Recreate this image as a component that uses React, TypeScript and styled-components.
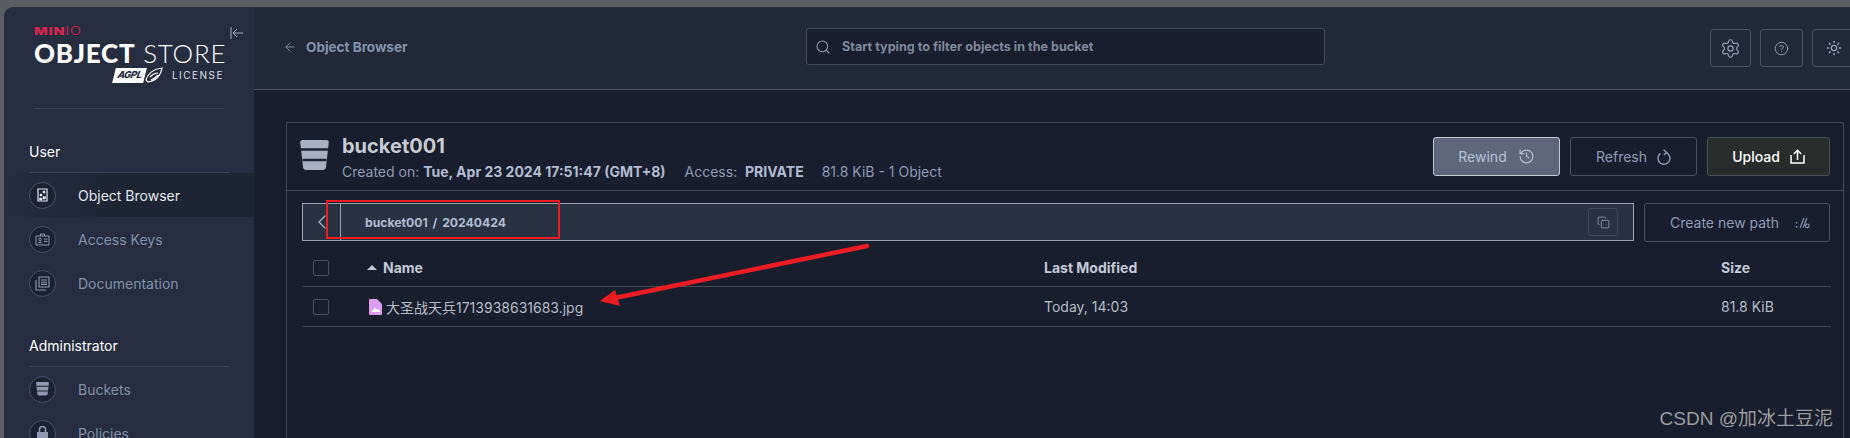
import type { ReactNode } from 'react';
import styled, { createGlobalStyle } from 'styled-components';
import { ArrowLeft, ChevronLeft, CircleHelp, Copy, History, Search, Settings, Sun } from 'lucide-react';

const GlobalStyle = createGlobalStyle`
  html, body { margin: 0; padding: 0; height: 100%; background: #5c5d62; overflow: hidden; }
  body { font-family: Inter, "Noto Sans CJK SC", sans-serif; }
  * { box-sizing: border-box; }
`;

const Page = styled.div`
  position: relative;
  width: 1850px;
  height: 438px;
  padding: 7px 0 0 4px;
  display: flex;
  overflow: hidden;
  background: #5c5d62;
`;

const Sidebar = styled.aside`
  position: relative;
  width: 250px;
  flex: none;
  background: #252d3e;
  border-top-left-radius: 9px;
  padding-top: 20px;
  overflow: hidden;
`;

const Collapse = styled.div`
  position: absolute;
  top: 19px;
  left: 226px;
  color: #a9b1bf;
  display: flex;
`;

const Logo = styled.div`
  margin: 0 0 0 30px;
  width: 190px;
  height: 82px;
  border-bottom: 1px solid #3a4253;
  color: #fff;
`;

const MinioMark = styled.div`
  font-size: 11px;
  line-height: 8px;
  height: 8px;
  font-weight: 800;
  color: #e0234e;
  letter-spacing: 0.6px;
  transform: scaleX(1.32);
  transform-origin: left;
  span { font-weight: 300; }
`;

const StoreTitle = styled.div`
  margin-top: 6px;
  font-size: 26px;
  line-height: 24px;
  height: 24px;
  white-space: nowrap;
  font-family: Lato, sans-serif;
  font-weight: 300;
  letter-spacing: 0.75px;
  b { font-weight: 900; }
`;

const LicenseRow = styled.div`
  margin-top: 2px;
  display: flex;
  justify-content: flex-end;
  align-items: center;
  gap: 9px;
`;

const AgplBadge = styled.div`
  display: flex;
  align-items: center;
  width: 49px;
  height: 16px;
`;

const AgplText = styled.div`
  width: 31px;
  height: 15px;
  background: #fff;
  color: #252d3e;
  font-size: 9.5px;
  line-height: 14px;
  font-weight: 800;
  font-style: italic;
  text-align: center;
  transform: skewX(-14deg);
  letter-spacing: -0.4px;
`;

const LicenseText = styled.div`
  font-size: 10px;
  letter-spacing: 1.5px;
  color: #dfe2e8;
`;

const GroupLabel = styled.div<{ $top: number }>`
  margin: ${({ $top }) => $top}px 25px 0 25px;
  height: 32px;
  padding-bottom: 12px;
  display: flex;
  align-items: flex-end;
  font-size: 14px;
  line-height: 16px;
  font-weight: 400;
  color: #fff;
  border-bottom: 1px solid #3a4253;
`;

const NavItem = styled.div<{ $active?: boolean }>`
  height: 44px;
  padding-left: 25px;
  display: flex;
  align-items: center;
  gap: 22px;
  font-size: 14px;
  color: ${({ $active }) => ($active ? '#e3e8f0' : '#8491a8')};
  background: ${({ $active }) => ($active ? 'linear-gradient(90deg, #252d3e 0%, #1d2432 45%, #1d2432 100%)' : 'transparent')};
`;

const NavIcon = styled.div<{ $active?: boolean }>`
  width: 27px;
  height: 27px;
  border-radius: 50%;
  border: 1px solid #4c5464;
  background: #1b2130;
  color: ${({ $active }) => ($active ? '#e3e8f0' : '#8f9ab0')};
  display: flex;
  align-items: center;
  justify-content: center;
`;

const Main = styled.main`
  flex: 1;
  min-width: 0;
  display: flex;
  flex-direction: column;
  background: #181e2b;
`;

const Header = styled.header`
  height: 83px;
  flex: none;
  background: #222936;
  border-bottom: 1px solid #4b505c;
  padding: 21px 0 0 29px;
  display: flex;
  align-items: flex-start;
`;

const BackLink = styled.div`
  width: 523px;
  height: 38px;
  flex: none;
  display: flex;
  align-items: center;
  gap: 9px;
  color: #8492aa;
  font-size: 13.5px;
  font-weight: 700;
`;

const SearchBox = styled.div`
  width: 519px;
  height: 37px;
  flex: none;
  background: #181e2b;
  border: 1px solid #454b58;
  border-radius: 3px;
  padding-left: 8px;
  display: flex;
  align-items: center;
  gap: 11px;
  color: #98a0ad;
  font-size: 12.6px;
  font-weight: 700;
  span { color: #7f8999; }
`;

const HeaderTools = styled.div`
  margin: 1px 0 0 385px;
  display: flex;
  gap: 9px;
  flex: none;
`;

const ToolButton = styled.div<{ $width: number }>`
  width: ${({ $width }) => $width}px;
  height: 38px;
  flex: none;
  border: 1px solid #4d5360;
  border-radius: 3px;
  color: #98a3b6;
  display: flex;
  align-items: center;
  justify-content: center;
`;

const Content = styled.div`
  flex: 1;
  padding: 32px 6px 0 32px;
  min-height: 0;
`;

const Panel = styled.section`
  height: 100%;
  border: 1px solid #444a57;
  border-bottom: 0;
  border-top-right-radius: 3px;
  display: flex;
  flex-direction: column;
`;

const PanelHead = styled.div`
  height: 68px;
  flex: none;
  border-bottom: 1px solid #444a57;
  padding: 11px 13px 0 13px;
  display: flex;
  align-items: flex-start;
`;

const BucketArt = styled.div`
  width: 29px;
  margin-top: 6px;
  color: #a9b1c1;
  flex: none;
  display: flex;
`;

const TitleBlock = styled.div`
  margin-left: 13px;
  flex: 1;
`;

const BucketName = styled.div`
  font-size: 20px;
  line-height: 24px;
  font-weight: 700;
  color: #c6cbd4;
`;

const Meta = styled.div`
  margin-top: 6px;
  display: flex;
  font-size: 14px;
  line-height: 16px;
  color: #8f9cb4;
  b { font-weight: 700; color: #b1bccf; }
`;

const MetaItem = styled.span<{ $gap?: number }>`
  margin-left: ${({ $gap }) => $gap ?? 0}px;
  white-space: pre;
`;

const Actions = styled.div`
  margin-top: 3px;
  display: flex;
  gap: 10px;
  flex: none;
`;

const ActionButton = styled.div<{ $kind?: 'active' | 'primary'; $width: number; $iconGap?: number; $inset?: number }>`
  width: ${({ $width }) => $width}px;
  height: 39px;
  padding-left: ${({ $inset }) => $inset ?? 0}px;
  border-radius: 3px;
  border: 1px solid ${({ $kind }) => ($kind === 'active' ? '#c4c9d2' : '#4a505c')};
  background: ${({ $kind }) => ($kind === 'active' ? '#5f687b' : $kind === 'primary' ? '#282d2c' : 'transparent')};
  color: ${({ $kind }) => ($kind === 'primary' ? '#fff' : $kind === 'active' ? '#b7c2d6' : '#8f9cb4')};
  display: flex;
  align-items: center;
  justify-content: center;
  gap: ${({ $iconGap }) => $iconGap ?? 10}px;
  font-size: 14px;
  font-weight: ${({ $kind }) => ($kind === 'primary' ? 500 : 400)};
`;

const PanelBody = styled.div`
  flex: 1;
  padding: 12px 12px 0 15px;
`;

const PathRow = styled.div`
  display: flex;
  gap: 10px;
`;

const Breadcrumb = styled.div`
  width: 1332px;
  height: 38px;
  flex: none;
  background: #293241;
  border: 1px solid #99a2b1;
  display: flex;
  align-items: center;
`;

const BackCell = styled.div`
  width: 38px;
  height: 100%;
  flex: none;
  border-right: 1px solid #99a2b1;
  color: #a9b3c4;
  display: flex;
  align-items: center;
  justify-content: center;
`;

const Crumbs = styled.div`
  flex: 1;
  padding-left: 24px;
  font-size: 12.2px;
  font-weight: 700;
  color: #b1bccf;
  word-spacing: 2px;
`;

const CopyButton = styled.div`
  width: 30px;
  height: 28px;
  margin-right: 15px;
  border: 1px solid #424b5a;
  border-radius: 3px;
  color: #a0a9b8;
  display: flex;
  align-items: center;
  justify-content: center;
`;

const Table = styled.div`
  margin: 7px 0 0 1px;
`;

const Row = styled.div<{ $head?: boolean }>`
  height: ${({ $head }) => ($head ? 38 : 40)}px;
  display: grid;
  grid-template-columns: 64px 677px 677px 1fr;
  align-items: center;
  border-bottom: 1px solid #444a57;
  font-size: 14px;
  font-weight: ${({ $head }) => ($head ? 700 : 400)};
  color: ${({ $head }) => ($head ? '#c3cad6' : '#b6bcc6')};
`;

const Check = styled.div`
  width: 16px;
  height: 16px;
  margin-left: 10px;
  border: 1px solid #4b515e;
  border-radius: 2px;
`;

const NameCell = styled.div<{ $gap: number }>`
  display: flex;
  align-items: center;
  gap: ${({ $gap }) => $gap}px;
  white-space: nowrap;
`;

const SortMark = styled.span`
  width: 0;
  height: 0;
  border-left: 5.5px solid transparent;
  border-right: 5.5px solid transparent;
  border-bottom: 5px solid #c3cad6;
`;

const FileArt = styled.div`
  margin-left: 2px;
  display: flex;
  flex: none;
`;

const Markup = styled.svg`
  position: absolute;
  left: 0;
  top: 0;
  pointer-events: none;
`;

const Watermark = styled.div`
  position: absolute;
  right: 17px;
  top: 408px;
  font-family: "Liberation Sans", "Noto Sans CJK SC", sans-serif;
  font-size: 19px;
  line-height: 22px;
  color: #9a9c9f;
  white-space: nowrap;
`;

function LogoBlock() {
  return (
    <Logo>
      <MinioMark>MIN<span>IO</span></MinioMark>
      <StoreTitle><b>OBJECT</b> STORE</StoreTitle>
      <LicenseRow>
        <AgplBadge>
          <AgplText>AGPL</AgplText>
          <svg width="18" height="16" viewBox="0 0 18 16" fill="none" stroke="#fff" strokeWidth="1.2">
            <path d="M1 13 C3 5 9 2 17 1 C16 8 11 14 3 15 Z" />
            <path d="M5 10 C8 7 11 6 13 6 M6 13 C9 12 11 10 13 8" />
          </svg>
        </AgplBadge>
        <LicenseText>LICENSE</LicenseText>
      </LicenseRow>
    </Logo>
  );
}

function BucketGlyph({ size }: { size: number }) {
  return (
    <svg width={size} height={size * (30 / 29)} viewBox="0 0 29 30" fill="currentColor">
      <path d="M2.5 0H26.5Q29 0 28.8 2.5L26 27Q25.7 30 23 30H6Q3.3 30 3 27L.2 2.5Q0 0 2.5 0Z" />
      <path d="M1 9.5H28M2.5 20H26.5" stroke="#1d2330" strokeWidth="2.4" />
    </svg>
  );
}

const objectIcon = (
  <svg width="13" height="14" viewBox="0 0 13 14" fill="none" stroke="currentColor">
    <path d="M2 1H11V13H2Z" strokeWidth="1.2" />
    <path d="M7 3H9V5H7ZM4 6H6V8H4ZM7 8.5H9.5V11H7ZM3.5 10H6V12H3.5Z" fill="currentColor" strokeWidth="0.5" />
  </svg>
);

const keyIcon = (
  <svg width="15" height="13" viewBox="0 0 15 13" fill="none" stroke="currentColor" strokeWidth="1">
    <path d="M1 3H14V12H1Z" />
    <path d="M5.5 3V1H9.5V3M9 6H12.5M9 8.5H12.5" />
    <circle cx="5" cy="6.5" r="1.3" />
    <path d="M2.8 10.5C3 9 7 9 7.2 10.5" />
  </svg>
);

const docsIcon = (
  <svg width="15" height="15" viewBox="0 0 15 15" fill="none" stroke="currentColor" strokeWidth="1.1">
    <path d="M4 1H14V11H4Z" />
    <path d="M1 4V14H11" />
    <path d="M6 4H12M6 6.2H12M6 8.4H12" />
  </svg>
);

const policyIcon = (
  <svg width="13" height="15" viewBox="0 0 13 15" fill="currentColor">
    <path d="M1 6H12V15H1Z" />
    <path d="M3.5 6V3.5a3 3 0 0 1 6 0V6" fill="none" stroke="currentColor" strokeWidth="1.6" />
  </svg>
);

function SideLink({ icon, label, active }: { icon: ReactNode; label: string; active?: boolean }) {
  return (
    <NavItem $active={active}>
      <NavIcon $active={active}>{icon}</NavIcon>
      {label}
    </NavItem>
  );
}

export default function App() {
  return (
    <Page>
      <GlobalStyle />
      <Sidebar>
        <Collapse>
          <svg width="14" height="14" viewBox="0 0 14 14" fill="none" stroke="currentColor" strokeWidth="1">
            <path d="M1 1V13M13 7H3M7 3L3 7L7 11" />
          </svg>
        </Collapse>
        <LogoBlock />
        <GroupLabel $top={32}>User</GroupLabel>
        <SideLink icon={objectIcon} label="Object Browser" active />
        <SideLink icon={keyIcon} label="Access Keys" />
        <SideLink icon={docsIcon} label="Documentation" />
        <GroupLabel $top={30}>Administrator</GroupLabel>
        <SideLink icon={<BucketGlyph size={13} />} label="Buckets" />
        <SideLink icon={policyIcon} label="Policies" />
      </Sidebar>
      <Main>
        <Header>
          <BackLink>
            <ArrowLeft size={14} strokeWidth={1.6} />
            Object Browser
          </BackLink>
          <SearchBox>
            <Search size={16} strokeWidth={1.6} />
            <span>Start typing to filter objects in the bucket</span>
          </SearchBox>
          <HeaderTools>
            <ToolButton $width={41}><Settings size={21} strokeWidth={1.3} /></ToolButton>
            <ToolButton $width={43}><CircleHelp size={15} strokeWidth={1.5} /></ToolButton>
            <ToolButton $width={43}><Sun size={16} strokeWidth={2} /></ToolButton>
          </HeaderTools>
        </Header>
        <Content>
          <Panel>
            <PanelHead>
              <BucketArt><BucketGlyph size={29} /></BucketArt>
              <TitleBlock>
                <BucketName>bucket001</BucketName>
                <Meta>
                  <MetaItem>Created on: <b>Tue, Apr 23 2024 17:51:47 (GMT+8)</b></MetaItem>
                  <MetaItem $gap={19}>Access:  <b>PRIVATE</b></MetaItem>
                  <MetaItem $gap={18}>81.8 KiB - 1 Object</MetaItem>
                </Meta>
              </TitleBlock>
              <Actions>
                <ActionButton $kind="active" $width={127} $iconGap={11}>
                  Rewind
                  <History size={17} strokeWidth={1.6} />
                </ActionButton>
                <ActionButton $width={127}>
                  Refresh
                  <svg width="14" height="16" viewBox="0 0 14 16" fill="none" stroke="currentColor" strokeWidth="1.4">
                    <path d="M3.4 4.4A6 6 0 1 0 9 3.6" />
                    <path d="M6.6 0.8L9.6 3.4L6.8 6" />
                  </svg>
                </ActionButton>
                <ActionButton $kind="primary" $width={123}>
                  Upload
                  <svg width="15" height="15" viewBox="0 0 15 15" fill="none" stroke="currentColor" strokeWidth="1.5">
                    <path d="M1 6V14H14V6M7.5 11V1.5M3.8 5L7.5 1.3L11.2 5" />
                  </svg>
                </ActionButton>
              </Actions>
            </PanelHead>
            <PanelBody>
              <PathRow>
                <Breadcrumb>
                  <BackCell><ChevronLeft size={24} strokeWidth={1.3} /></BackCell>
                  <Crumbs>bucket001 / 20240424</Crumbs>
                  <CopyButton><Copy size={13} strokeWidth={1.4} /></CopyButton>
                </Breadcrumb>
                <ActionButton $width={186} $iconGap={16} $inset={6}>
                  Create new path
                  <svg width="15" height="12" viewBox="0 0 15 12" fill="none" stroke="currentColor" strokeWidth="1.1">
                    <path d="M5 11L9 1M8 11L12 1" />
                    <circle cx="12.3" cy="8.8" r="1.8" />
                    <path d="M1.5 5V6.4M1.5 9V10.4" strokeWidth="1.5" />
                  </svg>
                </ActionButton>
              </PathRow>
              <Table>
                <Row $head>
                  <Check />
                  <NameCell $gap={6}><SortMark />Name</NameCell>
                  <div>Last Modified</div>
                  <div>Size</div>
                </Row>
                <Row>
                  <Check />
                  <NameCell $gap={4}>
                    <FileArt>
                      <svg width="13" height="16" viewBox="0 0 13 16">
                        <path d="M1 0H8L13 5V15Q13 16 12 16H1Q0 16 0 15V1Q0 0 1 0Z" fill="#dc9cf0" />
                        <path d="M2.5 13L6 8.5L8 11L9.5 10L11 13Z M3 12.5H10" fill="#fff" />
                      </svg>
                    </FileArt>
                    <span>大圣战天兵1713938631683.jpg</span>
                  </NameCell>
                  <div>Today, 14:03</div>
                  <div>81.8 KiB</div>
                </Row>
              </Table>
            </PanelBody>
          </Panel>
        </Content>
      </Main>
      <Markup width="1850" height="438" viewBox="0 0 1850 438">
        <rect x="327" y="201" width="232" height="37" fill="none" stroke="#ed1c24" strokeWidth="2" />
        <path d="M867 246L605 300" stroke="#ed1c24" strokeWidth="4.5" strokeLinecap="round" />
        <path d="M600 301L615 290L620 306Z" fill="#ed1c24" />
      </Markup>
      <Watermark>CSDN @加冰土豆泥</Watermark>
    </Page>
  );
}
